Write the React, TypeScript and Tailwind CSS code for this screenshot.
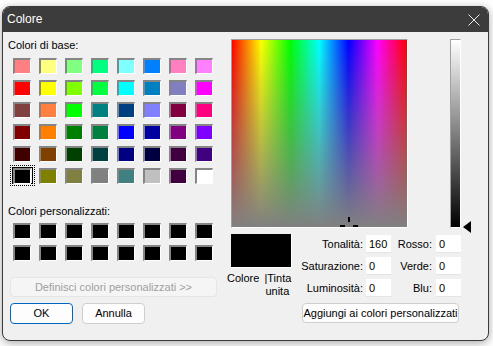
import React from 'react';

const baseColors: string[] = [
  'bg-[#ff8080]', 'bg-[#ffff80]', 'bg-[#80ff80]', 'bg-[#00ff80]', 'bg-[#80ffff]', 'bg-[#0080ff]', 'bg-[#ff80c0]', 'bg-[#ff80ff]',
  'bg-[#ff0000]', 'bg-[#ffff00]', 'bg-[#80ff00]', 'bg-[#00ff40]', 'bg-[#00ffff]', 'bg-[#0080c0]', 'bg-[#8080c0]', 'bg-[#ff00ff]',
  'bg-[#804040]', 'bg-[#ff8040]', 'bg-[#00ff00]', 'bg-[#008080]', 'bg-[#004080]', 'bg-[#8080ff]', 'bg-[#800040]', 'bg-[#ff0080]',
  'bg-[#800000]', 'bg-[#ff8000]', 'bg-[#008000]', 'bg-[#008040]', 'bg-[#0000ff]', 'bg-[#0000a0]', 'bg-[#800080]', 'bg-[#8000ff]',
  'bg-[#400000]', 'bg-[#804000]', 'bg-[#004000]', 'bg-[#004040]', 'bg-[#000080]', 'bg-[#000040]', 'bg-[#400040]', 'bg-[#400080]',
  'bg-[#000000]', 'bg-[#808000]', 'bg-[#808040]', 'bg-[#808080]', 'bg-[#408080]', 'bg-[#c0c0c0]', 'bg-[#400040]', 'bg-[#ffffff]',
];

const Swatch = ({ color, selected = false }: { color: string; selected?: boolean }) => (
  <div className="relative h-[16px] w-[18px]">
    {selected && (
      <>
        <div className="absolute -left-[3px] -top-[3px] -right-[4px] -bottom-[2px] border border-dotted border-black" />
        <div className="absolute -left-[1px] -top-[1px] -right-[2px] bottom-0 border border-black" />
      </>
    )}
    <div className={`relative h-full w-full border-l-2 border-t-2 border-r border-b border-l-[#858585] border-t-[#858585] border-r-white border-b-white ${color}`} />
  </div>
);

const Field = ({ label, value, pad }: { label: string; value: string; pad: string }) => (
  <>
    <span className={`${pad} text-right`}>{label}</span>
    <div className="h-[18px] w-[25px] bg-white pl-[3px] leading-[18px] border-b border-[#e4e4e4]">{value}</div>
  </>
);

export default function App() {
  return (
    <div className="h-[346px] w-[493px] bg-white pl-[2px] pt-[6px] text-[11px] leading-[13px] text-black" style={{ fontFamily: '"Liberation Sans", Arial, sans-serif' }}>
      <div className="flex h-[335px] w-[487px] flex-col overflow-hidden rounded-[8px] border border-[#3a3a3a] bg-[#f0f0f0] shadow-[0_2px_10px_rgba(0,0,0,0.35)]">
        {/* title bar */}
        <div className="flex h-[25px] shrink-0 items-center justify-between bg-[#3c3c3c] pl-[4px] pr-[8px] text-[12px] text-white">
          <span>Colore</span>
          <svg width="12" height="12" viewBox="0 0 12 12" className="text-[#e8e8e8]">
            <path d="M0.5 0.5 L11.5 11.5 M11.5 0.5 L0.5 11.5" stroke="currentColor" strokeWidth="1" fill="none" />
          </svg>
        </div>

        <div className="flex flex-1">
          {/* left column */}
          <div className="flex w-[224px] flex-col pl-[5px] pt-[7px]">
            <span>Colori di base:</span>
            <div className="ml-[5px] mt-[6px] grid grid-cols-[repeat(8,18px)] gap-x-[8px] gap-y-[6px]">
              {baseColors.map((c, i) => (
                <Swatch key={i} color={c} selected={i === 40} />
              ))}
            </div>

            <span className="mt-[21px]">Colori personalizzati:</span>
            <div className="ml-[5px] mt-[5px] grid grid-cols-[repeat(8,18px)] gap-x-[8px] gap-y-[6px]">
              {Array.from({ length: 16 }).map((_, i) => (
                <Swatch key={i} color="bg-black" />
              ))}
            </div>

            <button className="ml-[2px] mt-[16px] h-[20px] w-[207px] rounded-[4px] border border-[#e5e5e5] bg-[#f5f5f5] text-[#a0a0a0]">
              Definisci colori personalizzati &gt;&gt;
            </button>

            <div className="ml-[2px] mt-[6px] flex gap-[9px]">
              <button className="h-[21px] w-[63px] rounded-[4px] border border-[#0067c0] bg-[#fdfdfd]">OK</button>
              <button className="h-[21px] w-[63px] rounded-[4px] border border-[#cfcfcf] bg-[#fdfdfd]">Annulla</button>
            </div>
          </div>

          {/* right column */}
          <div className="flex flex-col pl-[4px] pt-[7px]">
            <div className="flex">
              <div className="relative h-[189px] w-[177px] border-l border-t border-r border-b border-l-[#a0a0a0] border-t-[#a0a0a0] border-r-white border-b-white">
                <div className="h-full w-full bg-[linear-gradient(to_bottom,rgba(128,128,128,0),#808080),linear-gradient(to_right,#ff0000,#ffff00,#00ff00,#00ffff,#0000ff,#ff00ff,#ff0000)]" />
                <div className="absolute left-[116px] top-[177px] h-[5px] w-[2px] bg-black" />
                <div className="absolute left-[108px] top-[185px] h-[2px] w-[5px] bg-black" />
                <div className="absolute left-[121px] top-[185px] h-[2px] w-[5px] bg-black" />
              </div>
              <div className="relative ml-[42px] h-[189px] w-[11px] border-l border-t border-r border-b border-l-[#a0a0a0] border-t-[#a0a0a0] border-r-white border-b-white">
                <div className="h-full w-full bg-[linear-gradient(to_bottom,#ffffff,#000000)]" />
                <svg width="8" height="12" viewBox="0 0 8 12" className="absolute left-[12px] top-[181px]">
                  <polygon points="0,6 8,0 8,12" fill="black" />
                </svg>
              </div>
            </div>

            <div className="mt-[6px] flex">
              <div className="flex w-[64px] flex-col">
                <div className="h-[34px] w-[61px] border-b border-r border-white bg-black" />
                <div className="-ml-[4px] mt-[4px] flex">
                  <span>Colore</span>
                  <span className="ml-[5px]">|Tinta<br /><span className="ml-[1px]">unita</span></span>
                </div>
              </div>

              <div className="flex flex-col">
                <div className="mt-[1px] grid grid-cols-[71px_25px_45px_25px] items-center gap-y-[4px]">
                  <Field label="Tonalità:" value="160" pad="pr-[3px]" />
                  <Field label="Rosso:" value="0" pad="pr-[4px]" />
                  <Field label="Saturazione:" value="0" pad="pr-[3px]" />
                  <Field label="Verde:" value="0" pad="pr-[4px]" />
                  <Field label="Luminosità:" value="0" pad="pr-[3px]" />
                  <Field label="Blu:" value="0" pad="pr-[4px]" />
                </div>
                <button className="ml-[7px] mt-[6px] h-[20px] w-[157px] rounded-[4px] border border-[#cfcfcf] bg-[#fdfdfd]">
                  Aggiungi ai colori personalizzati
                </button>
              </div>
            </div>
          </div>
        </div>
      </div>
    </div>
  );
}
